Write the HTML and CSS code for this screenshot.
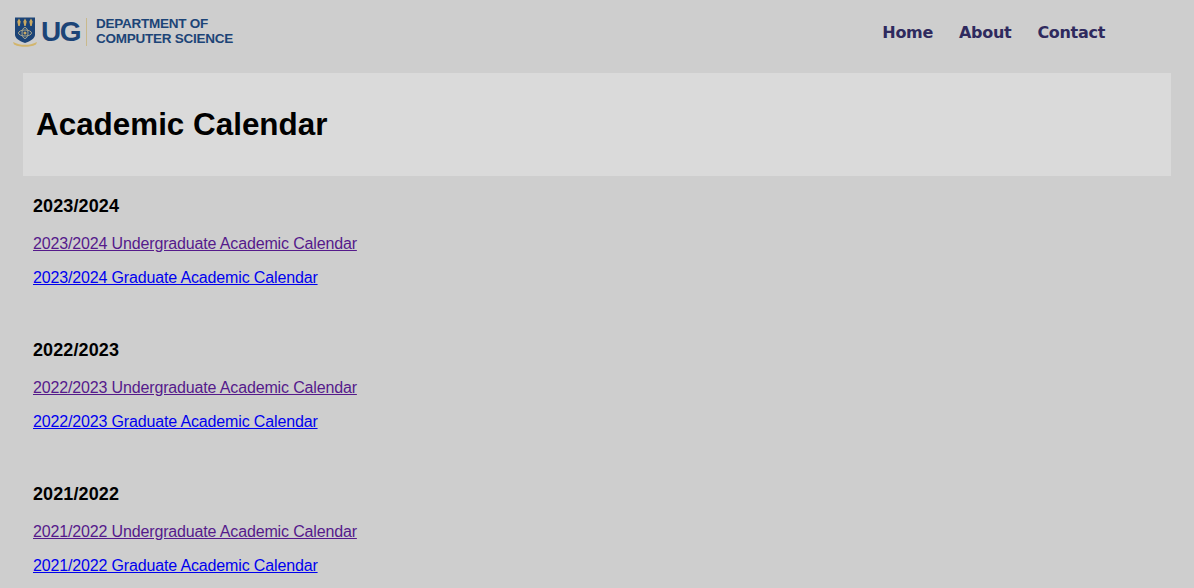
FILE: index.html
```html
<!DOCTYPE html>
<html lang="en">
<head>
<meta charset="utf-8">
<title>Academic Calendar</title>
<link rel="stylesheet" href="styles.css">
</head>
<body>
<header class="topbar">
  <a class="logo" href="#">
    <svg class="crest" width="24" height="30" viewBox="0 0 24 30">
      <path d="M2 0.500h20v17c0 4-4.500 6.500-10 8.500C6.500 24 2 21.500 2 17.500z" fill="#1c4477"/>
      <path d="M6 1.500l1.700 3-1 4.500h-1.400l-1-4.500zM12 1.500l1.700 3-1 4.500h-1.400l-1-4.500zM18 1.500l1.700 3-1 4.500h-1.400l-1-4.500z" fill="#c9a860"/>
      <ellipse cx="12" cy="16" rx="6.500" ry="3" fill="none" stroke="#a9a68c" stroke-width="1"/>
      <ellipse cx="12" cy="16" rx="3" ry="5.500" fill="none" stroke="#a9a68c" stroke-width="1"/>
      <circle cx="12" cy="16" r="1.500" fill="#c9a860"/>
      <path d="M0 25c4 2 8 2.800 12 2.800S20 27 24 25l-1 2.500c-4 2-7 2.200-11 2.200s-7-.2-11-2.200z" fill="#d2b56c"/>
    </svg>
    <span class="logo-ug">UG</span>
    <span class="logo-rule"></span>
    <span class="logo-dept">DEPARTMENT OF<br>COMPUTER SCIENCE</span>
  </a>
  <nav class="nav">
    <a href="#">Home</a>
    <a href="#">About</a>
    <a href="#">Contact</a>
  </nav>
</header>
<section class="banner"><h1>Academic Calendar</h1></section>
<main class="content">
  <section class="year">
    <h2>2023/2024</h2>
    <p><a class="visited" href="#">2023/2024 Undergraduate Academic Calendar</a></p>
    <p><a href="#">2023/2024 Graduate Academic Calendar</a></p>
  </section>
  <section class="year">
    <h2>2022/2023</h2>
    <p><a class="visited" href="#">2022/2023 Undergraduate Academic Calendar</a></p>
    <p><a href="#">2022/2023 Graduate Academic Calendar</a></p>
  </section>
  <section class="year">
    <h2>2021/2022</h2>
    <p><a class="visited" href="#">2021/2022 Undergraduate Academic Calendar</a></p>
    <p><a href="#">2021/2022 Graduate Academic Calendar</a></p>
  </section>
</main>
</body>
</html>
```
FILE: styles.css
```css
body {
  margin: 0;
  background: #cecece;
  font-family: "Liberation Sans", Arial, sans-serif;
  color: #000;
}
.topbar {
  height: 73px;
  display: flex;
  align-items: center;
  justify-content: space-between;
  padding: 0 89px 10px 13px;
  box-sizing: border-box;
}
.logo {
  display: flex;
  align-items: center;
  text-decoration: none;
  color: #1c4477;
}
.crest { margin-right: 4px; }
.logo-ug { font-weight: 700; font-size: 28px; line-height: 30px; letter-spacing: -1.500px; margin-right: 6px; }
.logo-rule { width: 1px; height: 28px; background: #c9b98c; margin-right: 9px; }
.logo-dept { font-weight: 700; font-size: 13.500px; line-height: 15px; letter-spacing: -0.250px; padding-bottom: 2px; }
.nav { display: flex; gap: 26px; padding-top: 2px; }
.nav a {
  font-family: "DejaVu Sans", Verdana, sans-serif;
  font-weight: 700;
  font-size: 16px;
  letter-spacing: -0.300px;
  color: #2f2a5e;
  text-decoration: none;
}
.banner {
  margin: 0 23px;
  height: 103px;
  background: #dadada;
  display: flex;
  align-items: center;
  padding-left: 13px;
}
.banner h1 { margin: 0; font-size: 31.400px; font-weight: 700; }
.content { padding: 20px 33px 0; }
.year { margin-bottom: 53px; }
.year:last-child { margin-bottom: 0; }
.year h2 { margin: 0 0 19px; font-size: 18px; line-height: 20px; font-weight: 700; letter-spacing: 0.100px; }
.year p { margin: 0 0 16px; font-size: 16px; line-height: 18px; letter-spacing: -0.150px; }
.year p:last-child { margin-bottom: 0; }
.year:not(:last-child) p:last-child { margin-bottom: 16px; }
.year a { color: #0000ee; }
.year a.visited { color: #551a8b; }
```
